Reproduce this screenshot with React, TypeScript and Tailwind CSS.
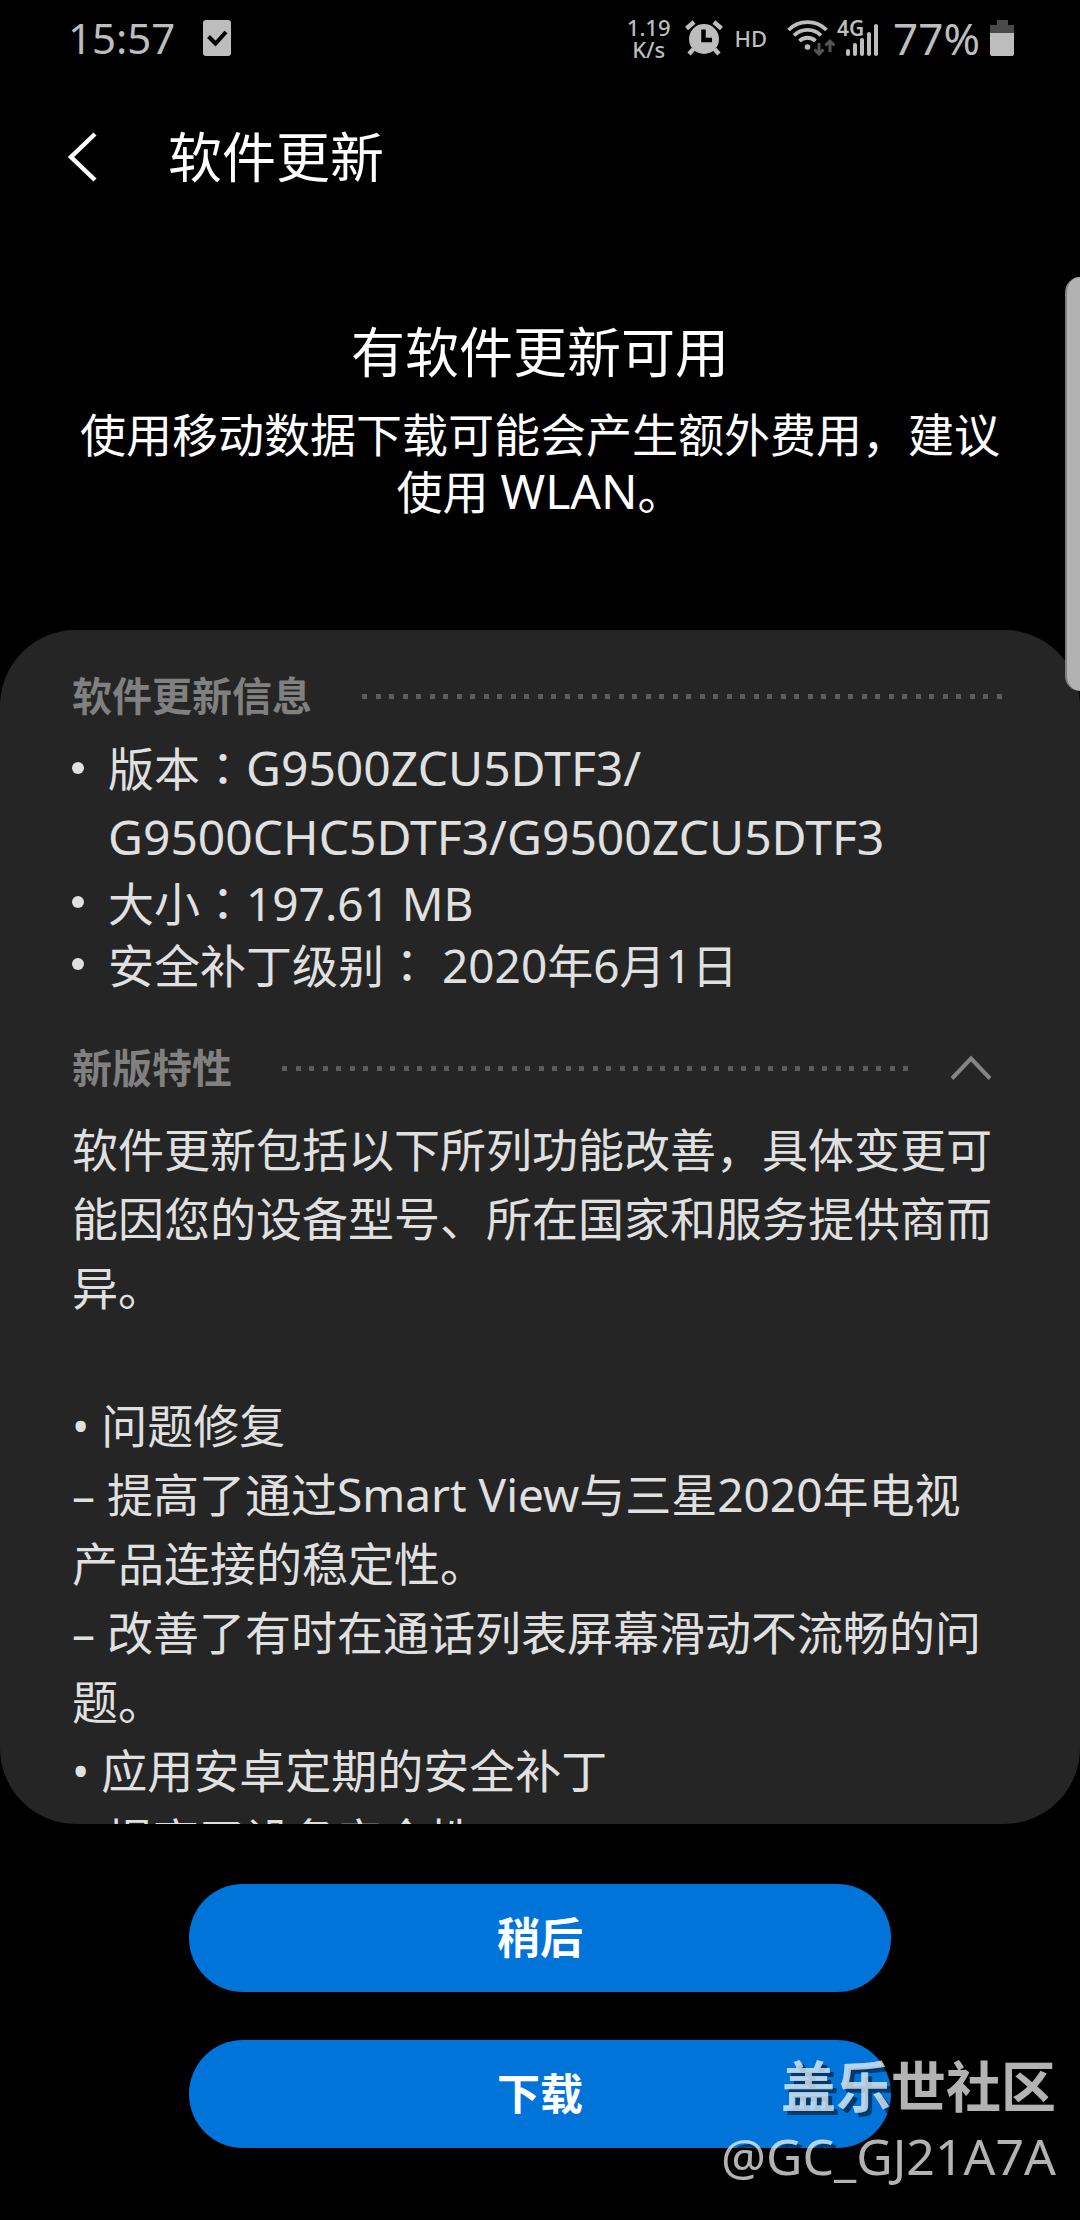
import { useState } from 'react';
import type { ReactNode } from 'react';

const notes = [
  '软件更新包括以下所列功能改善，具体变更可能因您的设备型号、所在国家和服务提供商而异。',
  '',
  '• 问题修复',
  '– 提高了通过Smart View与三星2020年电视产品连接的稳定性。',
  '– 改善了有时在通话列表屏幕滑动不流畅的问题。',
  '• 应用安卓定期的安全补丁',
  '– 提高了设备安全性。',
];

function Dots({ count }: { count: number }) {
  return (
    <div className="flex flex-1 justify-between" aria-hidden="true">
      {Array.from({ length: count }, (_, i) => (
        <span key={i} className="h-[5px] w-[5px] bg-[#5c5c5c]" />
      ))}
    </div>
  );
}

// the Japanese form of the full-width colon sits in the middle of its cell
function Colon() {
  return <span lang="ja">：</span>;
}

function Latin({ children }: { children: ReactNode }) {
  return <span className="text-[48px] leading-none">{children}</span>;
}

function StatusBar() {
  return (
    <div className="flex h-[76px] shrink-0 items-center justify-between pr-[66px] pl-[68px] text-[#bdbdbd]">
      <div className="flex items-center gap-7">
        <span className="text-[42px] leading-[60px]">15:57</span>
        <svg width="28" height="36" viewBox="0 0 28 36">
          <rect width="28" height="36" rx="3" fill="#bdbdbd" />
          <path d="M5.5 16.5l7 7L23 12" fill="none" stroke="#000" strokeWidth="4" />
        </svg>
      </div>

      <div className="flex items-center">
        <div className="text-center text-[22px] leading-[22px] font-medium">
          1.19
          <br />
          K/s
        </div>
        <svg className="ml-[14px]" width="38" height="36" viewBox="0 0 38 36">
          <circle cx="19" cy="19" r="15" fill="#bdbdbd" />
          <path
            d="M1.5 8.5L9 2M36.5 8.5L29 2M8.5 29L4 34M29.5 29L34 34"
            stroke="#bdbdbd"
            strokeWidth="4.5"
          />
          <path d="M18.5 9.5V20H27" fill="none" stroke="#000" strokeWidth="4.5" />
        </svg>
        <span className="ml-3 text-[22px] leading-[22px] font-medium">HD</span>
        <svg className="ml-5" width="48" height="36" viewBox="0 0 48 36">
          <g fill="none" stroke="#bdbdbd" strokeWidth="3.8">
            <path d="M1.5 10a27 27 0 0 1 38 0" />
            <path d="M7 15.5a19 19 0 0 1 27 0" />
            <path d="M12.5 21a11.5 11.5 0 0 1 16 0" />
          </g>
          <circle cx="20.5" cy="27" r="2.8" fill="#bdbdbd" />
          <g fill="none" stroke="#555" strokeWidth="3">
            <path d="M32 23v11M27.5 29.5l4.500 4.500 4.500-4.500" />
            <path d="M43 32V21M38.5 25.5l4.500-4.500 4.500 4.500" />
          </g>
        </svg>
        <svg
          className="ml-[2px] overflow-visible"
          width="42"
          height="36"
          viewBox="0 0 42 36"
        >
          <text x="0" y="16" fontSize="21" fontWeight="600" fill="#bdbdbd">
            4G
          </text>
          <g fill="#bdbdbd">
            <rect x="9" y="29" width="4" height="7" rx="2" />
            <rect x="16" y="23" width="4" height="13" rx="2" />
            <rect x="23" y="18" width="4" height="18" rx="2" />
            <rect x="30" y="12" width="4" height="24" rx="2" />
            <rect x="37" y="4" width="4" height="32" rx="2" />
          </g>
        </svg>
        <span className="ml-[14px] text-[44px] leading-[60px]">77%</span>
        <svg className="ml-[10px]" width="24" height="36" viewBox="0 0 24 36">
          <path d="M7 0h11v5h6v9H0V5h7z" fill="#4a4a4a" />
          <path d="M0 13h24v21a2 2 0 0 1-2 2H2a2 2 0 0 1-2-2z" fill="#bdbdbd" />
        </svg>
      </div>
    </div>
  );
}

export default function App() {
  const [expanded, setExpanded] = useState(true);

  return (
    <div
      lang="zh-CN"
      className="relative flex h-screen flex-col overflow-hidden bg-black pb-[72px] font-['Noto_Sans','Noto_Sans_CJK_SC',sans-serif] text-white"
    >
      <StatusBar />

      <header className="flex h-[162px] shrink-0 items-center gap-[68px] pl-[66px]">
        <button type="button" aria-label="返回">
          <svg width="34" height="50" viewBox="0 0 34 50">
            <path d="M29 2L5 25l24 23" fill="none" stroke="#fff" strokeWidth="4.5" />
          </svg>
        </button>
        <h1 className="text-[54px] leading-[72px]">软件更新</h1>
      </header>

      <section className="shrink-0 px-20 pt-[78px] pb-[110px] text-center">
        <h2 className="text-[54px] leading-[72px]">有软件更新可用</h2>
        <p className="mt-[18px] text-[46px] leading-[57px]">
          使用移动数据下载可能会产生额外费用，建议使用 <Latin>WLAN</Latin>。
        </p>
      </section>

      <main className="min-h-0 flex-1 overflow-y-auto rounded-[76px] bg-[#252525] pt-9 pr-[78px] pl-[72px] text-[46px] text-[#e0e0e0] [scrollbar-width:none]">
        <div className="flex items-center gap-[50px]">
          <h3 className="text-[40px] leading-[60px] font-bold text-[#808080]">软件更新信息</h3>
          <Dots count={48} />
        </div>

        <ul className="mt-2 leading-[62px]">
          <li className="flex gap-6 leading-[69px]">
            <span className="mt-7 h-3 w-3 shrink-0 rounded-full bg-[#e0e0e0]" />
            <span>
              版本<Colon />
              <Latin>
                G9500ZCU5DTF3/
                <br />
                G9500CHC5DTF3/G9500ZCU5DTF3
              </Latin>
            </span>
          </li>
          <li className="flex gap-6">
            <span className="mt-6 h-3 w-3 shrink-0 rounded-full bg-[#e0e0e0]" />
            <span>
              大小<Colon />197.61 MB
            </span>
          </li>
          <li className="flex gap-6">
            <span className="mt-6 h-3 w-3 shrink-0 rounded-full bg-[#e0e0e0]" />
            <span>
              安全补丁级别<Colon /> 2020年6月1日
            </span>
          </li>
        </ul>

        <div className="mt-[42px] flex items-center pr-[10px]">
          <h3 className="mr-[50px] text-[40px] leading-[60px] font-bold text-[#808080]">
            新版特性
          </h3>
          <Dots count={47} />
          <button
            type="button"
            className="ml-[42px]"
            aria-label="新版特性"
            aria-expanded={expanded}
            onClick={() => setExpanded(!expanded)}
          >
            <svg
              className={expanded ? '' : 'rotate-180'}
              width="42"
              height="26"
              viewBox="0 0 42 26"
            >
              <path d="M2 23.5L21 3.5l19 20" fill="none" stroke="#858585" strokeWidth="4" />
            </svg>
          </button>
        </div>

        {expanded && (
          <div className="mt-[17px] leading-[69px]">
            {notes.map((line, i) => (
              <p key={i} className="min-h-[69px]">
                {line}
              </p>
            ))}
          </div>
        )}
      </main>

      <div className="mt-[60px] flex shrink-0 flex-col items-center gap-12">
        <button
          type="button"
          className="h-[108px] w-[65%] rounded-full bg-[#0074d8] text-[43px] font-bold"
        >
          稍后
        </button>
        <button
          type="button"
          className="h-[108px] w-[65%] rounded-full bg-[#0074d8] text-[43px] font-bold"
        >
          下载
        </button>
      </div>

      {/* edge panel handle */}
      <div className="absolute top-[277px] right-0 h-[414px] w-[15px] rounded-l-[15px] border-l-2 border-[#808080] bg-[#b2b2b2]" />

      {/* watermark */}
      <div className="pointer-events-none absolute right-6 bottom-[30px] text-right text-white/70 [text-shadow:4px_4px_0_rgba(0,0,0,0.5)]">
        <div className="text-[55px] leading-[72px] font-bold">盖乐世社区</div>
        <div className="text-[50px] leading-[68px]">@GC_GJ21A7A</div>
      </div>
    </div>
  );
}
